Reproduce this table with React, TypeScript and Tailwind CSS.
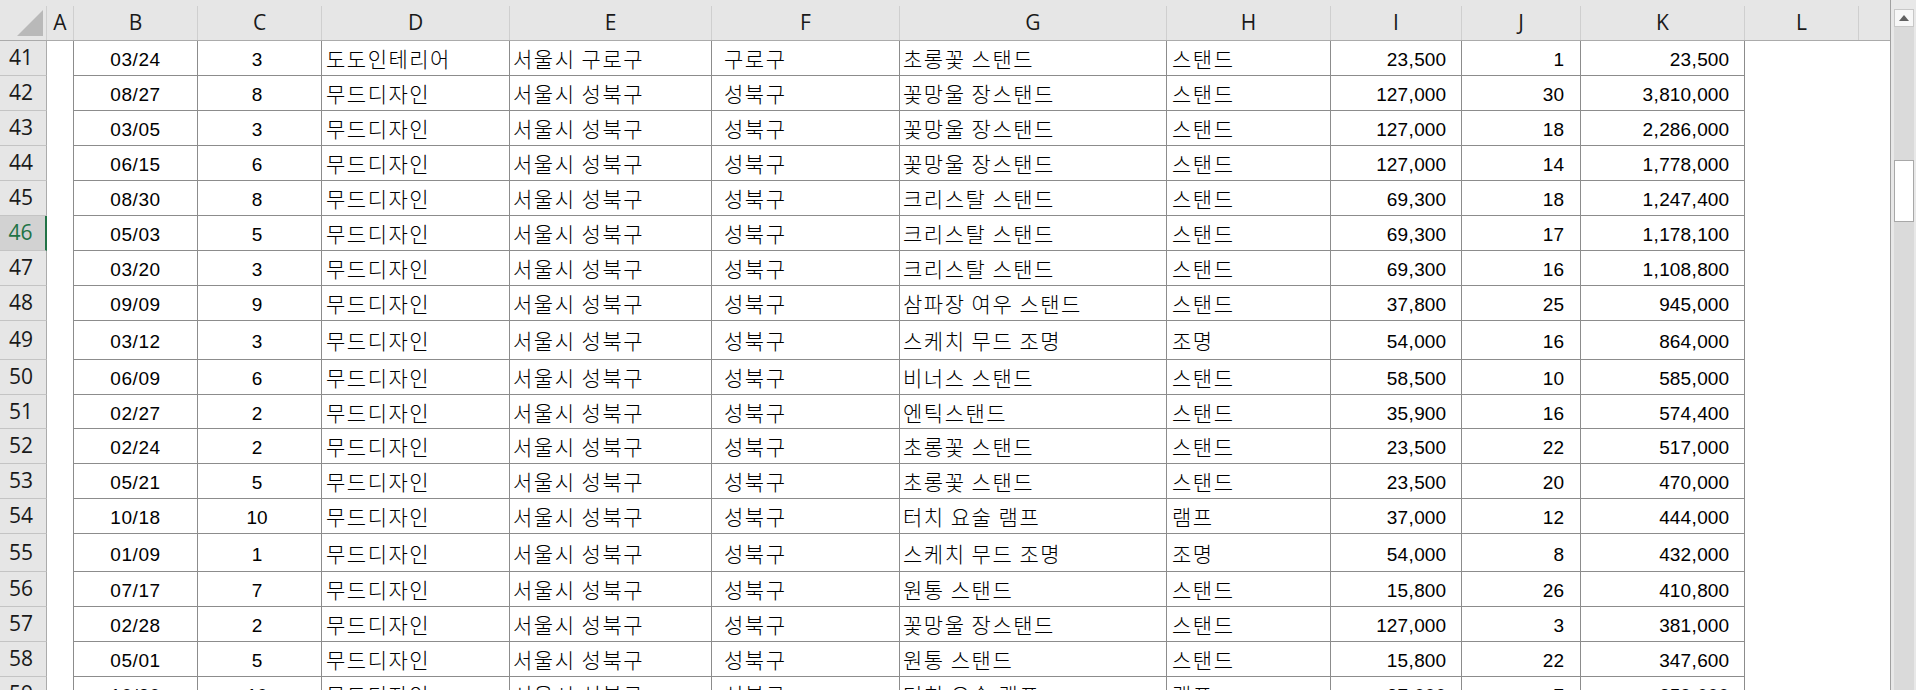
import React from "react";

type Row = {
  n: number;
  h: string;
  b: string;
  c: string;
  d: string;
  e: string;
  f: string;
  g: string;
  hh: string;
  i: string;
  j: string;
  k: string;
};

const S = "서울시 성북구";
const M = "무드디자인";
const F = "성북구";

const rows: Row[] = [
  { n: 41, h: "h-[35px]", b: "03/24", c: "3", d: "도도인테리어", e: "서울시 구로구", f: "구로구", g: "초롱꽃 스탠드", hh: "스탠드", i: "23,500", j: "1", k: "23,500" },
  { n: 42, h: "h-[35px]", b: "08/27", c: "8", d: M, e: S, f: F, g: "꽃망울 장스탠드", hh: "스탠드", i: "127,000", j: "30", k: "3,810,000" },
  { n: 43, h: "h-[35px]", b: "03/05", c: "3", d: M, e: S, f: F, g: "꽃망울 장스탠드", hh: "스탠드", i: "127,000", j: "18", k: "2,286,000" },
  { n: 44, h: "h-[35px]", b: "06/15", c: "6", d: M, e: S, f: F, g: "꽃망울 장스탠드", hh: "스탠드", i: "127,000", j: "14", k: "1,778,000" },
  { n: 45, h: "h-[35px]", b: "08/30", c: "8", d: M, e: S, f: F, g: "크리스탈 스탠드", hh: "스탠드", i: "69,300", j: "18", k: "1,247,400" },
  { n: 46, h: "h-[35px]", b: "05/03", c: "5", d: M, e: S, f: F, g: "크리스탈 스탠드", hh: "스탠드", i: "69,300", j: "17", k: "1,178,100" },
  { n: 47, h: "h-[35px]", b: "03/20", c: "3", d: M, e: S, f: F, g: "크리스탈 스탠드", hh: "스탠드", i: "69,300", j: "16", k: "1,108,800" },
  { n: 48, h: "h-[35px]", b: "09/09", c: "9", d: M, e: S, f: F, g: "삼파장 여우 스탠드", hh: "스탠드", i: "37,800", j: "25", k: "945,000" },
  { n: 49, h: "h-[39px]", b: "03/12", c: "3", d: M, e: S, f: F, g: "스케치 무드 조명", hh: "조명", i: "54,000", j: "16", k: "864,000" },
  { n: 50, h: "h-[35px]", b: "06/09", c: "6", d: M, e: S, f: F, g: "비너스 스탠드", hh: "스탠드", i: "58,500", j: "10", k: "585,000" },
  { n: 51, h: "h-[34px]", b: "02/27", c: "2", d: M, e: S, f: F, g: "엔틱스탠드", hh: "스탠드", i: "35,900", j: "16", k: "574,400" },
  { n: 52, h: "h-[35px]", b: "02/24", c: "2", d: M, e: S, f: F, g: "초롱꽃 스탠드", hh: "스탠드", i: "23,500", j: "22", k: "517,000" },
  { n: 53, h: "h-[35px]", b: "05/21", c: "5", d: M, e: S, f: F, g: "초롱꽃 스탠드", hh: "스탠드", i: "23,500", j: "20", k: "470,000" },
  { n: 54, h: "h-[35px]", b: "10/18", c: "10", d: M, e: S, f: F, g: "터치 요술 램프", hh: "램프", i: "37,000", j: "12", k: "444,000" },
  { n: 55, h: "h-[38px]", b: "01/09", c: "1", d: M, e: S, f: F, g: "스케치 무드 조명", hh: "조명", i: "54,000", j: "8", k: "432,000" },
  { n: 56, h: "h-[35px]", b: "07/17", c: "7", d: M, e: S, f: F, g: "원통 스탠드", hh: "스탠드", i: "15,800", j: "26", k: "410,800" },
  { n: 57, h: "h-[35px]", b: "02/28", c: "2", d: M, e: S, f: F, g: "꽃망울 장스탠드", hh: "스탠드", i: "127,000", j: "3", k: "381,000" },
  { n: 58, h: "h-[35px]", b: "05/01", c: "5", d: M, e: S, f: F, g: "원통 스탠드", hh: "스탠드", i: "15,800", j: "22", k: "347,600" },
  { n: 59, h: "h-[35px]", b: "10/20", c: "10", d: M, e: S, f: F, g: "터치 요술 램프", hh: "램프", i: "37,000", j: "7", k: "259,000" },
];

const headerFont = "font-['Open_Sans','Noto_Sans',sans-serif]";
const latin = "font-['Liberation_Sans','Noto_Sans_CJK_KR',sans-serif] text-[19px] leading-none text-black";
const korean = "font-['Noto_Sans_CJK_KR',sans-serif] text-[21px] leading-none tracking-[1.5px] font-light text-black";
const cell = "shrink-0 border-r border-b border-[#8c8c8c] flex items-center overflow-hidden whitespace-nowrap";

function Num({ v }: { v: string }) {
  return (
    <span>
      {v.split("").map((ch, idx) =>
        ch === "," ? (
          <span key={idx} className="mx-[0.5px]">,</span>
        ) : (
          <span key={idx}>{ch}</span>
        )
      )}
    </span>
  );
}

function HeaderCell({ w, label }: { w: string; label: string }) {
  return (
    <div className={`${w} shrink-0 h-full flex flex-col justify-end`}>
      <div
        className={`h-[34px] flex items-center justify-center text-[21px] text-[#1a1a1a] border-r border-[#cfcfcf] ${headerFont}`}
      >
        {label}
      </div>
    </div>
  );
}

export default function App() {
  return (
    <div className="w-[1916px] h-[690px] overflow-hidden flex bg-white">
      <div className="w-[1890px] shrink-0 flex flex-col overflow-hidden">
        {/* header */}
        <div className="h-[41px] shrink-0 flex bg-[#e6e6e6] border-b border-[#ababab]">
          <div className="w-[47px] shrink-0 h-full flex flex-col justify-end">
            <div className="h-[34px] border-r border-[#cfcfcf] relative">
              <svg className="absolute left-0 top-0" width="46" height="34" viewBox="0 0 46 34">
                <polygon points="17,30 43,30 43,4" fill="#b9b9b9" />
              </svg>
            </div>
          </div>
          <HeaderCell w="w-[27px]" label="A" />
          <HeaderCell w="w-[124px]" label="B" />
          <HeaderCell w="w-[124px]" label="C" />
          <HeaderCell w="w-[188px]" label="D" />
          <HeaderCell w="w-[202px]" label="E" />
          <HeaderCell w="w-[188px]" label="F" />
          <HeaderCell w="w-[267px]" label="G" />
          <HeaderCell w="w-[164px]" label="H" />
          <HeaderCell w="w-[131px]" label="I" />
          <HeaderCell w="w-[119px]" label="J" />
          <HeaderCell w="w-[164px]" label="K" />
          <HeaderCell w="w-[114px]" label="L" />
          <div className="flex-1" />
        </div>

        {/* rows */}
        {rows.map((r) => {
          const sel = r.n === 46;
          return (
            <div key={r.n} className={`${r.h} shrink-0 flex`}>
              <div
                className={`w-[47px] shrink-0 flex items-center justify-center pr-[4px] text-[21px] ${headerFont} border-b border-b-[#c4c4c4] ${
                  sel
                    ? "bg-[#d2d2d2] text-[#217346] border-r-2 border-r-[#217346]"
                    : "bg-[#e6e6e6] text-[#1a1a1a] border-r border-r-[#ababab]"
                }`}
              >
                {r.n}
              </div>
              <div className="w-[27px] shrink-0 border-r border-[#8c8c8c]" />
              <div className={`w-[124px] ${cell} justify-center pt-[3px] tracking-[0.6px] ${latin}`}>{r.b}</div>
              <div className={`w-[124px] ${cell} justify-center pt-[3px] pr-[5px] ${latin}`}>{r.c}</div>
              <div className={`w-[188px] ${cell} pl-[4px] pt-[1px] ${korean}`}>{r.d}</div>
              <div className={`w-[202px] ${cell} pl-[3px] pt-[1px] ${korean}`}>{r.e}</div>
              <div className={`w-[188px] ${cell} pl-[12px] pt-[1px] ${korean}`}>{r.f}</div>
              <div className={`w-[267px] ${cell} pl-[3px] pt-[1px] ${korean}`}>{r.g}</div>
              <div className={`w-[164px] ${cell} pl-[5px] pt-[1px] ${korean}`}>{r.hh}</div>
              <div className={`w-[131px] ${cell} justify-end pr-[15px] pt-[3px] ${latin}`}>
                <Num v={r.i} />
              </div>
              <div className={`w-[119px] ${cell} justify-end pr-[16px] pt-[3px] ${latin}`}>
                <Num v={r.j} />
              </div>
              <div className={`w-[164px] ${cell} justify-end pr-[15px] pt-[3px] ${latin}`}>
                <Num v={r.k} />
              </div>
              <div className="w-[114px] shrink-0" />
              <div className="flex-1" />
            </div>
          );
        })}
      </div>

      {/* vertical scrollbar */}
      <div className="w-[26px] shrink-0 h-full border-l border-[#a0a0a0] bg-[#e8e8e8] flex flex-col pl-[3px] pr-[2px] pt-[9px]">
        <div className="h-[18px] shrink-0 bg-[#f7f7f7] border border-[#c8c8c8] flex items-center justify-center">
          <svg width="10" height="6" viewBox="0 0 10 6">
            <polygon points="0,6 10,6 5,0" fill="#606060" />
          </svg>
        </div>
        <div className="flex-1 bg-[#dadada] flex flex-col">
          <div className="h-[133px] shrink-0" />
          <div className="h-[62px] shrink-0 bg-white border border-[#a8a8a8]" />
        </div>
      </div>
    </div>
  );
}
